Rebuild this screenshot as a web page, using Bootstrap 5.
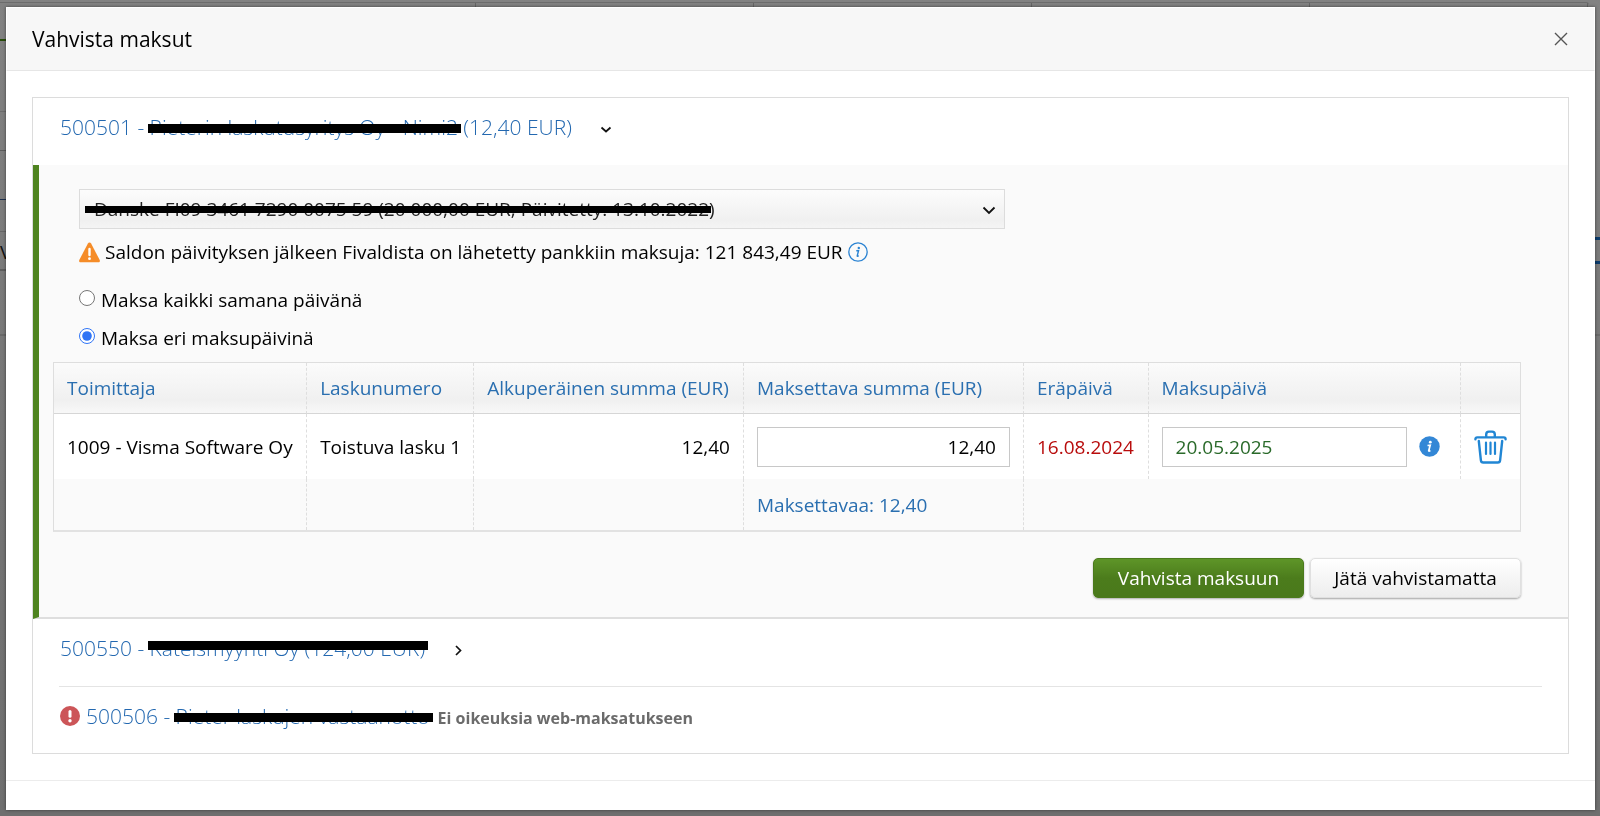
<!DOCTYPE html>
<html lang="fi">
<head>
<meta charset="utf-8">
<meta name="viewport" content="width=device-width, initial-scale=1">
<title>Vahvista maksut</title>
<link href="https://cdn.jsdelivr.net/npm/bootstrap@5.3.0/dist/css/bootstrap.min.css" rel="stylesheet">
<style>
  body { font-family: "Open Sans", sans-serif; font-size: 19px; font-weight: 400; line-height: 26px; color: #000; background: #747474; }

  /* dimmed page behind the dialog */
  .page-behind { position: fixed; inset: 0; overflow: hidden; background: linear-gradient(#828282, #747474 60%, #6f6f6f); }
  .page-behind .edge-left { position: absolute; left: 0; top: 0; bottom: 0; width: 6px;
    background: linear-gradient(#294d0c, #294d0c) 0 39px / 100% 2px no-repeat,
      linear-gradient(#6c6c6c, #6c6c6c) 0 111px / 100% 1px no-repeat,
      linear-gradient(#5c5c5c, #5c5c5c) 0 150px / 100% 1px no-repeat,
      linear-gradient(#1d2f4c, #1d2f4c) 0 199px / 100% 1px no-repeat,
      linear-gradient(#666, #666) 0 231px / 100% 1px no-repeat,
      linear-gradient(#5e5e5e, #5e5e5e) 0 269px / 100% 2px no-repeat,
      linear-gradient(#696969, #696969) 0 334px / 100% 2px no-repeat; }
  .page-behind .edge-right { position: absolute; right: 0; top: 0; bottom: 0; width: 5px;
    background: linear-gradient(#0c3c6c, #0c3c6c) 0 237px / 100% 3px no-repeat,
      linear-gradient(#0c3c6c, #0c3c6c) 0 261px / 100% 3px no-repeat,
      linear-gradient(#6a6a6a, #6a6a6a) 0 334px / 100% 2px no-repeat; }
  .page-behind .edge-top { position: absolute; left: 0; right: 11px; top: 2px; height: 5px; border-top: 1px solid #6c6c6c; border-top-right-radius: 3px;
    background: repeating-linear-gradient(90deg, transparent 0 277px, #666 277px 278px) 198px 0 no-repeat; }
  .page-behind span { position: absolute; left: 0; top: 239px; color: #111; }

  .dialog-box { position: relative; margin: 7px 5px 5px 6px; background: #fff; box-shadow: 0 0 3px rgba(0,0,0,.5); }
  .dialog-head { height: 64px; padding: 0 25px; background: #f7f7f7; border: 1px solid #fff; border-bottom-color: #e6e6e6; }
  .dialog-head h1 { font-size: 21px; line-height: 28px; font-weight: 400; }
  .close-x { width: 16px; height: 16px; }
  .dialog-main { padding: 26px; }
  .dialog-foot { border-top: 1px solid #ececec; height: 30px; }

  .accounts { border: 1px solid #dcdcdc; }
  .account { margin: 0 26px; height: 67px; padding: 0 1px 9px; }
  .account + .account { border-top: 1px solid #e4e4e4; }
  .account-link { font-size: 21px; line-height: 28px; font-weight: 300; color: #2368b0; text-decoration: none; }
  .account-link + svg { margin-left: 28px; margin-top: 3px; }
  .struck { position: relative; white-space: nowrap; }
  .struck::after { content: ""; position: absolute; left: -2px; right: -3px; top: 11px; height: 9px; background: #000; }
  .struck-high::after { top: 7px; }
  .warn-dot { margin-right: 6px; }
  .no-rights { font-size: 16px; font-weight: 700; color: #6b6b6b; padding-top: 4px; }

  .panel-open { border-left: 6px solid #4f8420; border-bottom: 2px solid #dedede; background: #fafafa; padding: 24px 47px 19px 14px; }
  .pay-options { padding-left: 26px; margin-bottom: -1px; }
  .bank-pick { position: relative; max-width: 926px; }
  .bank-pick select { display: block; appearance: none; width: 100%; height: 40px; padding: 0 14px; color: #222; border: 1px solid #dcdcdc; border-radius: 0; background: linear-gradient(#fcfcfc, #f0f0f0 80%, #f4f4f4); }
  .bank-pick svg { position: absolute; right: 9px; top: 14px; pointer-events: none; }
  .bank-pick .bar { position: absolute; left: 6px; width: 626px; top: 17px; height: 7px; background: #000; pointer-events: none; }
  .warn-line { gap: 5px; margin: 10px 0 22px; }
  .choice { gap: 6px; margin-bottom: 12px; }
  .choice input { width: 16px; height: 16px; margin: 3px 0 0; accent-color: #2f74f5; }

  .pay-table { width: 100%; table-layout: fixed; border: 1px solid #dedede; border-bottom: 2px solid #e2e2e2; border-collapse: separate; border-spacing: 0; }
  .pay-table th, .pay-table td { padding: 0 13px; white-space: nowrap; }
  .pay-table th + th, .pay-table td + td { border-left: 1px dashed #dedede; }
  .pay-table th { height: 51px; font-weight: inherit; color: #2a6fb0; background: linear-gradient(#fbfbfb, #f0f0f0 75%, #f8f8f8); border-bottom: 1px solid #d6d6d6; }
  .pay-table tbody td { height: 65px; background: #fff; }
  .pay-table tfoot td { height: 51px; color: #2a6fb0; }
  .pay-table input { display: block; width: 100%; min-width: 0; height: 40px; padding: 0 13px; border: 1px solid #c8c8c8; color: #000; border-radius: 0; }
  .pay-table input.date-field { color: #2a6a2a; }
  .pay-date { gap: 12px; padding-right: 7px; }
  .pay-table tbody .due { color: #b80c0c; }

  .act-row { margin-top: 26px; gap: 6px; }
  .act-btn { width: 211px; height: 40px; border-radius: 5px; font-size: 19px; line-height: 26px; padding: 0; }
  .act-go, .act-go:hover { color: #fff; border: 1px solid #4b7a1c; background: linear-gradient(#5e9528, #4c7c1c 50%, #4a791b); box-shadow: 0 1px 2px rgba(0,0,0,.3); }
  .act-skip, .act-skip:hover { color: #000; border: 1px solid #e0e0e0; background: linear-gradient(#fff, #ededed); box-shadow: 0 1px 2px rgba(0,0,0,.35); }
</style>
</head>
<body>
<div class="page-behind" aria-hidden="true">
  <div class="edge-top"></div>
  <div class="edge-left"></div>
  <div class="edge-right"></div>
  <span>V</span>
</div>

<main class="dialog-box" role="dialog" aria-labelledby="dlg-title">
  <header class="dialog-head d-flex align-items-center justify-content-between">
    <h1 id="dlg-title" class="m-0">Vahvista maksut</h1>
    <button type="button" class="close-x btn p-0 border-0 d-flex" aria-label="Sulje">
      <svg width="16" height="16" viewBox="0 0 16 16" stroke="#555" stroke-width="1.4" fill="none"><path d="M2 2l12 12M14 2L2 14"/></svg>
    </button>
  </header>

  <div class="dialog-main">
    <section class="accounts">
      <div class="account d-flex align-items-center">
        <a href="#" class="account-link">500501 - <span class="struck">Pieterin laskutusyritys Oy - Nimi2</span> (12,40 EUR)</a>
        <svg width="12" height="12" viewBox="0 0 12 12" fill="none" stroke="#111" stroke-width="1.7"><path d="M1.500 4.500l4.500 4 4.500-4"/></svg>
      </div>

      <div class="panel-open">
        <div class="pay-options">
          <div class="bank-pick">
            <select aria-label="Pankkitili"><option>Danske FI09 3461 7290 0075 59 (20 000,00 EUR, Päivitetty: 13.10.2022)</option></select>
            <span class="bar"></span>
            <svg width="14" height="14" viewBox="0 0 14 14" fill="none" stroke="#111" stroke-width="1.8"><path d="M1.500 4.500l5.500 5.500 5.500-5.500"/></svg>
          </div>
          <p class="warn-line d-flex align-items-center">
            <svg class="flex-shrink-0" width="21" height="21" viewBox="0 0 21 21"><path fill="#f58c28" d="M10.500.5c.7 0 1.200.4 1.600 1.100l8.500 16.200c.7 1.400.1 2.500-1.300 2.500H1.700c-1.400 0-2-1.100-1.300-2.500L8.900 1.600C9.300.9 9.800.5 10.500.5z"/><path stroke="#fff" stroke-width="2.400" stroke-linecap="round" d="M10.500 7v6"/><circle cx="10.500" cy="16.700" r="1.400" fill="#fff"/></svg>
            <span>Saldon päivityksen jälkeen Fivaldista on lähetetty pankkiin maksuja: 121 843,49 EUR</span>
            <svg class="flex-shrink-0" width="20" height="20" viewBox="0 0 20 20"><circle cx="10" cy="10" r="9.200" fill="none" stroke="#2b83d2" stroke-width="1.300"/><circle cx="10.800" cy="5.900" r="1.200" fill="#2b83d2"/><path d="M8.300 8.800l2.300-.3-1.400 5.400c-.1.500.3.600 1.500-.3" fill="none" stroke="#2b83d2" stroke-width="1.400"/></svg>
          </p>
          <div class="choice d-flex"><input type="radio" name="pay" id="same"><label for="same">Maksa kaikki samana päivänä</label></div>
          <div class="choice d-flex"><input type="radio" name="pay" id="diff" checked><label for="diff">Maksa eri maksupäivinä</label></div>
        </div>

        <table class="pay-table">
          <colgroup>
            <col style="width:17.2%"><col style="width:11.4%"><col style="width:18.4%"><col style="width:19.1%"><col style="width:8.5%"><col style="width:21.3%"><col style="width:4.1%">
          </colgroup>
          <thead>
            <tr><th scope="col">Toimittaja</th><th scope="col">Laskunumero</th><th scope="col">Alkuperäinen summa (EUR)</th><th scope="col">Maksettava summa (EUR)</th><th scope="col">Eräpäivä</th><th scope="col">Maksupäivä</th><th></th></tr>
          </thead>
          <tbody>
            <tr>
              <td>1009 - Visma Software Oy</td>
              <td>Toistuva lasku 1</td>
              <td class="text-end">12,40</td>
              <td><input type="text" class="text-end" value="12,40" aria-label="Maksettava summa (EUR)"></td>
              <td class="due">16.08.2024</td>
              <td>
                <div class="pay-date d-flex align-items-center">
                  <input type="text" class="date-field" value="20.05.2025" aria-label="Maksupäivä">
                  <svg class="flex-shrink-0" width="21" height="21" viewBox="0 0 21 21"><circle cx="10.500" cy="10.500" r="10.200" fill="#3387d6"/><circle cx="11.300" cy="6.200" r="1.400" fill="#fff"/><path d="M8.500 9.500l2.700-.3-1.500 5.500c-.1.500.5.500 1.700-.2" fill="none" stroke="#fff" stroke-width="1.700"/></svg>
                </div>
              </td>
              <td>
                <button type="button" class="btn p-0 border-0 d-flex" aria-label="Poista">
                  <svg width="33" height="34" viewBox="0 0 33 34" fill="none" stroke="#2186d4" stroke-linecap="round" stroke-linejoin="round"><path stroke-width="2.400" d="M1.400 9.200c0-1.400.6-1.800 1.800-1.800h26.600c1.200 0 1.800.4 1.800 1.800M12.200 7V4.400c0-1.900 1-2.800 2.700-2.800h3.200c1.700 0 2.700.9 2.700 2.800V7M4.800 11l2.100 19.300c.2 1.600.9 2.200 2.300 2.200h14.600c1.400 0 2.100-.6 2.300-2.200L28.200 11"/><path stroke-width="2.200" d="M12 12.500v11.500M16.500 12.500v11.500M21 12.500v11.500"/></svg>
                </button>
              </td>
            </tr>
          </tbody>
          <tfoot>
            <tr><td></td><td></td><td></td><td>Maksettavaa: 12,40</td><td colspan="3"></td></tr>
          </tfoot>
        </table>

        <div class="act-row d-flex justify-content-end">
          <button type="button" class="btn act-btn act-go">Vahvista maksuun</button>
          <button type="button" class="btn act-btn act-skip">Jätä vahvistamatta</button>
        </div>
      </div>

      <div class="account d-flex align-items-center">
        <a href="#" class="account-link">500550 - <span class="struck struck-high">Käteismyynti Oy (124,00 EUR)</span></a>
        <svg width="12" height="12" viewBox="0 0 12 12" fill="none" stroke="#111" stroke-width="1.700"><path d="M3 2l4.500 4.500L3 11"/></svg>
      </div>
      <div class="account d-flex align-items-center">
        <svg class="warn-dot flex-shrink-0" width="20" height="20" viewBox="0 0 20 20"><circle cx="10" cy="10" r="10" fill="#cc5558"/><path stroke="#fff" stroke-width="3" stroke-linecap="round" d="M10 5.500v4.800"/><circle cx="10" cy="14.700" r="1.700" fill="#fff"/></svg>
        <a href="#" class="account-link">500506 - <span class="struck">Pieter laskujen vastaanotto</span></a>
        <span class="no-rights ms-2">Ei oikeuksia web-maksatukseen</span>
      </div>
    </section>
  </div>
  <footer class="dialog-foot"></footer>
</main>
<script src="https://cdn.jsdelivr.net/npm/bootstrap@5.3.0/dist/js/bootstrap.bundle.min.js"></script>
</body>
</html>
